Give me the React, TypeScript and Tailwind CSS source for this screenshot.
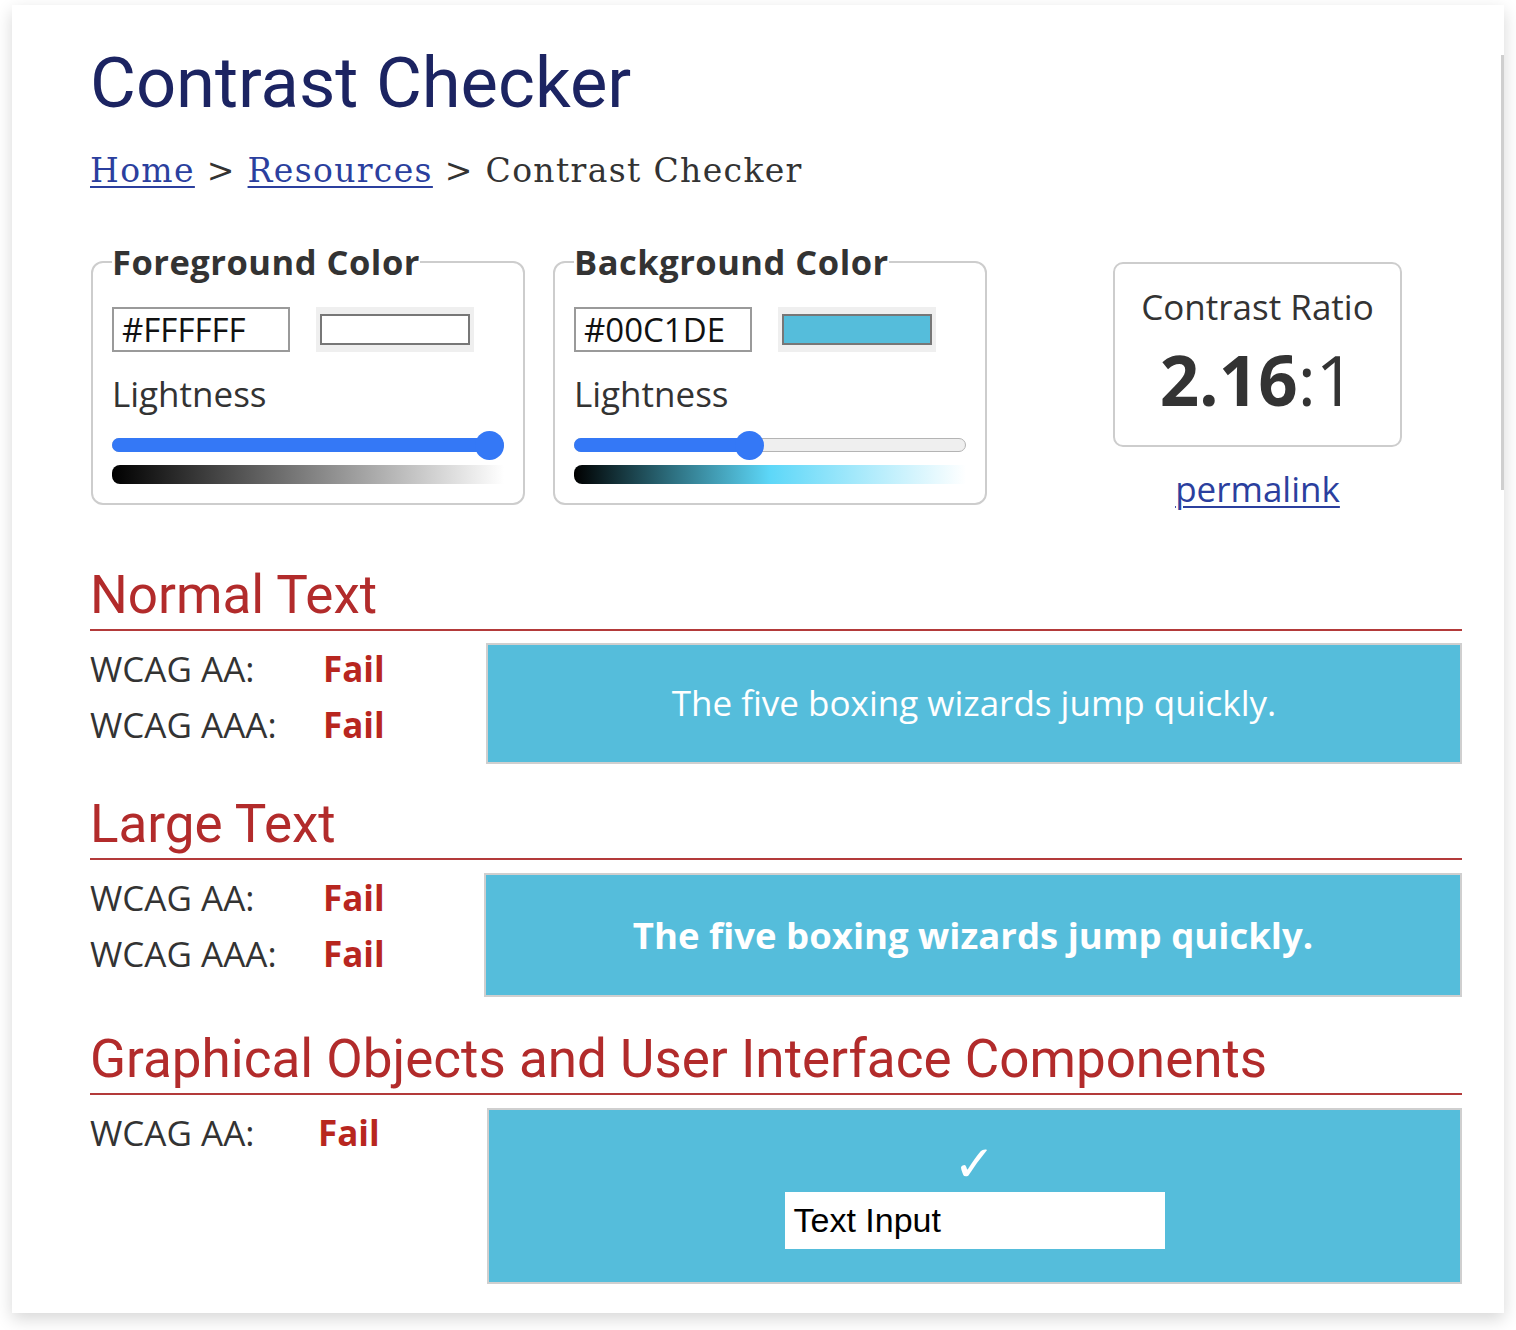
import React from 'react';

const SAMPLE = 'bg-[#55bddb]';

interface ColorFieldProps {
  legend: string;
  hex: string;
  swatch: string;
  lightness: number; // 0..1
  gradient: string;
  className?: string;
}

function Slider({ value }: { value: number }) {
  return (
    <div className="relative flex h-[30px] items-center">
      <div className="h-[14px] w-full rounded-full border border-[#b4b4b4] bg-[#efefef]" />
      <div
        className="absolute left-0 h-[14px] rounded-full bg-[#3478f6]"
        style={{ width: `calc(${value} * (100% - 29px) + 15px)` }}
      />
      <div
        className="absolute h-[29px] w-[29px] rounded-full bg-[#3478f6]"
        style={{ left: `calc(${value} * (100% - 29px))` }}
      />
    </div>
  );
}

function ColorField({ legend, hex, swatch, lightness, gradient, className }: ColorFieldProps) {
  return (
    <fieldset className={`w-[434px] rounded-[12px] border-2 border-[#cdcdcd] px-[19px] pb-[19px] ${className ?? ''}`}>
      <legend className="px-0 text-[34.5px] font-bold leading-[32px] tracking-[0.5px] text-[#333]">{legend}</legend>
      <div className="mt-[29px] flex items-center gap-[26px]">
        <div className="flex h-[45px] w-[178px] items-center border-2 border-[#9a9a9a] pl-[8px] text-[33px] text-[#111]">
          {hex}
        </div>
        <div className="flex h-[45px] w-[158px] items-center justify-center bg-[#efefef]">
          <div className={`h-[31px] w-[150px] border-2 border-[#777] ${swatch}`} />
        </div>
      </div>
      <div className="mt-[19px] text-[35px] leading-[46px] text-[#333]">Lightness</div>
      <div className="mt-[13px]">
        <Slider value={lightness} />
      </div>
      <div className={`mt-[5px] h-[19px] w-full rounded-l-[8px] ${gradient}`} />
    </fieldset>
  );
}

function ResultRow({ label, labelWidth = 'w-[233px]' }: { label: string; labelWidth?: string }) {
  return (
    <div className="flex text-[35px] leading-[56px]">
      <span className={`${labelWidth} text-[#333]`}>{label}</span>
      <span className="font-bold text-[#b8261f]">Fail</span>
    </div>
  );
}

function SectionHeading({ children }: { children: React.ReactNode }) {
  return (
    <h2 className="border-b-2 border-[#b33a3a] pb-[4px] font-['Roboto',sans-serif] text-[53px] leading-[60px] text-[#b22b2b]">
      {children}
    </h2>
  );
}

export default function App() {
  return (
    <div className="min-h-screen bg-white px-[12px] pt-[5px] pb-[18px] font-['Open_Sans',sans-serif]">
      <div className="relative bg-white pl-[78px] pr-[42px] pt-[42px] pb-[29px] shadow-[0_6px_16px_rgba(0,0,0,0.16)]">
        {/* scrollbar edge */}
        <div className="absolute right-0 top-[50px] h-[435px] w-[3px] bg-[#cfcfcf]" />

        <h1 className="font-['Roboto',sans-serif] text-[70.5px] leading-[72px] text-[#1c2462]">Contrast Checker</h1>

        <nav className="mt-[32px] font-['DejaVu_Serif',serif] text-[33px] leading-[40px] tracking-[1.35px] text-[#333]">
          <a href="#" className="text-[#2b3f9e] underline decoration-2 underline-offset-[4px]">Home</a>
          <span> &gt; </span>
          <a href="#" className="text-[#2b3f9e] underline decoration-2 underline-offset-[4px]">Resources</a>
          <span> &gt; Contrast Checker</span>
        </nav>

        <div className="mt-[55px] flex items-start">
          <ColorField
            className="ml-[1px]"
            legend="Foreground Color"
            hex="#FFFFFF"
            swatch="bg-white"
            lightness={1}
            gradient="bg-[linear-gradient(to_right,#000000,#ffffff)]"
          />
          <ColorField
            className="ml-[28px]"
            legend="Background Color"
            hex="#00C1DE"
            swatch={SAMPLE}
            lightness={0.443}
            gradient="bg-[linear-gradient(to_right,#000000_0%,#2d6f7f_25%,#5dd7f8_50%,#ffffff_100%)]"
          />
          <div className="ml-[126px] flex w-[289px] flex-col items-center">
            <div className="mt-[16px] flex h-[185px] w-full flex-col items-center rounded-[10px] border-2 border-[#cdcdcd] pt-[23px] text-[#333]">
              <div className="text-[35px] leading-[40px]">Contrast Ratio</div>
              <div className="mt-[16px] text-[69px] leading-[72px]">
                <span className="font-bold">2.16</span>:1
              </div>
            </div>
            <a href="#" className="mt-[22px] text-[35px] leading-[40px] text-[#2b3f9e] underline decoration-2 underline-offset-[4px]">
              permalink
            </a>
          </div>
        </div>

        <section className="mt-[56px]">
          <SectionHeading>Normal Text</SectionHeading>
          <div className="flex">
            <div className="mt-[10px] w-[396px]">
              <ResultRow label="WCAG AA:" />
              <ResultRow label="WCAG AAA:" />
            </div>
            <div className={`mt-[12px] flex h-[121px] flex-1 items-center justify-center border-2 border-[#cfcfcf] ${SAMPLE}`}>
              <span className="text-[35px] text-white">The five boxing wizards jump quickly.</span>
            </div>
          </div>
        </section>

        <section className="mt-[30px]">
          <SectionHeading>Large Text</SectionHeading>
          <div className="flex">
            <div className="mt-[10px] w-[394px]">
              <ResultRow label="WCAG AA:" />
              <ResultRow label="WCAG AAA:" />
            </div>
            <div className={`mt-[13px] flex h-[124px] flex-1 items-center justify-center border-2 border-[#cfcfcf] ${SAMPLE}`}>
              <span className="text-[36.5px] font-bold text-white">The five boxing wizards jump quickly.</span>
            </div>
          </div>
        </section>

        <section className="mt-[32px]">
          <SectionHeading>Graphical Objects and User Interface Components</SectionHeading>
          <div className="flex">
            <div className="mt-[10px] w-[397px]">
              <ResultRow label="WCAG AA:" labelWidth="w-[228px]" />
            </div>
            <div className={`mt-[13px] flex h-[176px] flex-1 flex-col items-center border-2 border-[#cfcfcf] pt-[28px] ${SAMPLE}`}>
              <span className="font-['DejaVu_Sans',sans-serif] text-[50px] leading-[52px] text-white">✓</span>
              <div className="mt-[2px] flex h-[57px] w-[380px] items-center bg-white pl-[9px] font-['Liberation_Sans',sans-serif] text-[34px] text-black">
                Text Input
              </div>
            </div>
          </div>
        </section>
      </div>
    </div>
  );
}
